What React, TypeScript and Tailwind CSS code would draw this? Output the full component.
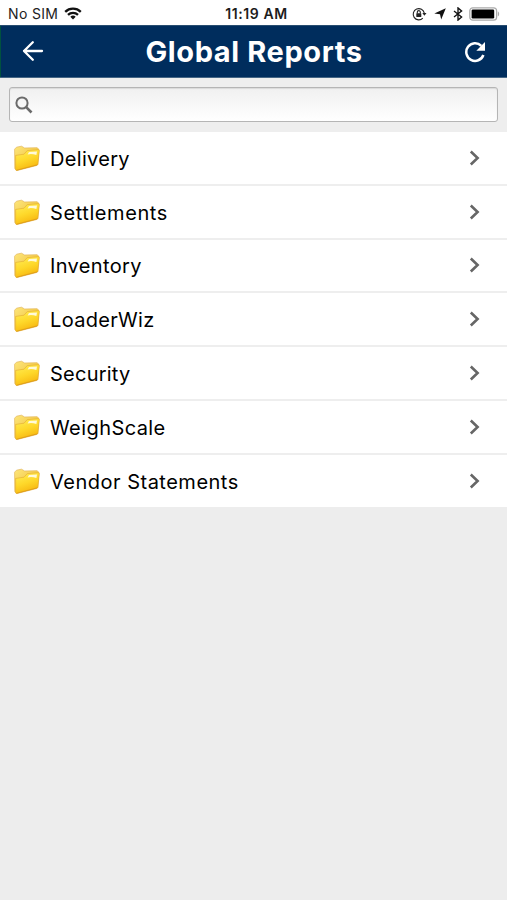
const reports = [
  { name: 'Delivery', tracking: 'tracking-[0.32px]' },
  { name: 'Settlements', tracking: 'tracking-[0.58px]' },
  { name: 'Inventory', tracking: 'tracking-[0.36px]' },
  { name: 'LoaderWiz', tracking: 'tracking-[0.32px]' },
  { name: 'Security', tracking: 'tracking-[0.24px]' },
  { name: 'WeighScale', tracking: 'tracking-[0.42px]' },
  { name: 'Vendor Statements', tracking: 'tracking-[0.5px]' },
];

function WifiIcon() {
  return (
    <svg width="18" height="13" viewBox="0 0 18 13" fill="none" stroke="#111" strokeWidth="2.3">
      <path d="M1.2 4.8a11.2 11.2 0 0 1 15.6 0" />
      <path d="M4 7.8a7.2 7.2 0 0 1 10 0" />
      <path d="M9 12.4 6.3 9.8a3.9 3.9 0 0 1 5.4 0z" fill="#111" stroke="none" />
    </svg>
  );
}

function RotationLockIcon() {
  return (
    <svg width="15" height="14" viewBox="0 0 15 14" fill="none" stroke="#222" strokeWidth="1.1">
      <path d="M10.8 11.2A5.6 5.6 0 1 1 12.3 6.2" />
      <path d="M10.3 6h4.2l-2.1 2.7z" fill="#222" stroke="none" />
      <rect x="4.3" y="6.2" width="5" height="3.8" rx=".5" fill="#222" stroke="none" />
      <path d="M5.3 6.5V5.1a1.5 1.5 0 0 1 3 0v1.4" />
    </svg>
  );
}

function LocationIcon() {
  return (
    <svg width="12" height="12" viewBox="0 0 12 12" fill="#111">
      <path d="M11.8.3 7.2 11.6 6 6.3.3 5.5z" />
    </svg>
  );
}

function BluetoothIcon() {
  return (
    <svg width="10" height="14" viewBox="0 0 10 14" fill="none" stroke="#111" strokeWidth="1.35">
      <path d="m1 4 7.6 6L5 13.1V.9L8.6 4 1 10" />
    </svg>
  );
}

function BatteryIcon() {
  return (
    <svg width="31" height="14" viewBox="0 0 31 14">
      <rect x=".8" y=".8" width="26.8" height="12.4" rx="3" fill="#fff" stroke="#aaa" strokeWidth="1.2" />
      <rect x="2.6" y="2.5" width="22.6" height="9" rx="1.2" fill="#000" />
      <path d="M28.8 4.6c1.8.5 1.8 4.3 0 4.8z" fill="#aaa" />
    </svg>
  );
}

function FolderIcon() {
  return (
    <svg width="28" height="28" viewBox="0 0 28 28" className="shrink-0">
      <defs>
        <linearGradient id="folderFront" x1="0.2" y1="0" x2="0.6" y2="1">
          <stop offset="0" stopColor="#ffec55" />
          <stop offset=".5" stopColor="#fed82a" />
          <stop offset="1" stopColor="#f6b20c" />
        </linearGradient>
        <linearGradient id="folderBack" x1="0" y1="0" x2="1" y2="1">
          <stop offset="0" stopColor="#fde67c" />
          <stop offset="1" stopColor="#edb625" />
        </linearGradient>
      </defs>
      <path
        d="M1.6 4.2 3.5 2.2 8.5 1.2 11.6 3 24 2.7 25.9 4.3 24.8 19.5 3.3 25.2 1.8 23.5z"
        fill="url(#folderBack)"
        stroke="#e2b65a"
        strokeWidth=".7"
        strokeLinejoin="round"
      />
      <path
        d="M2.6 10.4 11 9.2 14.2 5.7 25.3 4.6Q26.5 4.8 26.3 6L24.9 19.2Q24.7 20.2 23.6 20.5L4.2 25.5Q2.7 25.8 2.6 24.3z"
        fill="url(#folderFront)"
        stroke="#e3aa30"
        strokeWidth=".6"
      />
      <path d="M16 7.1 24 6.5 23.4 10.1Q18.4 8.4 14.6 9.6z" fill="#fffdec" opacity=".9" />
      <path d="M3.7 25.2 24.2 19.9" stroke="#c77b12" strokeWidth=".8" opacity=".5" />
    </svg>
  );
}

function StatusBar() {
  return (
    <div className="grid h-[25px] shrink-0 grid-cols-3 items-center bg-white pr-[7px] pl-2 pt-[2px] text-[14px] text-[#222]">
      <div className="flex items-center gap-[6px]">
        <span className="tracking-[0.35px]">No SIM</span>
        <WifiIcon />
      </div>
      <div className="pl-[5px] text-center text-[14px] font-semibold tracking-[0.6px] text-[#1c1c1c]">11:19 AM</div>
      <div className="flex items-center justify-end">
        <RotationLockIcon />
        <span className="ml-[7px] flex"><LocationIcon /></span>
        <span className="ml-[7px] flex"><BluetoothIcon /></span>
        <span className="ml-[6px] flex"><BatteryIcon /></span>
      </div>
    </div>
  );
}

function Header() {
  return (
    <header className="flex h-[53px] shrink-0 items-center justify-between border-y border-t-[#284d70] border-b-[#456685] bg-[#002d5d] pr-[21px] pl-[22px] text-white shadow-[inset_1px_0_0_#00513f]">
      <button aria-label="Back" className="flex w-[22px] -translate-y-px">
        <svg width="22" height="22" viewBox="0 0 22 22" fill="none" stroke="currentColor" strokeWidth="2.3" strokeLinecap="round" strokeLinejoin="round">
          <path d="M20 11H2M10.8 2.2 2 11l8.8 8.8" />
        </svg>
      </button>
      <h1 className="text-[29px] leading-none font-bold tracking-[0.6px]">Global Reports</h1>
      <button aria-label="Refresh" className="flex w-[22px]">
        <svg width="22" height="22" viewBox="0 0 22 22">
          <path d="M19.4 14A8.8 8.8 0 1 1 17.3 4.8" fill="none" stroke="currentColor" strokeWidth="2.5" />
          <path d="M21 1v8.7h-8.7z" fill="currentColor" />
        </svg>
      </button>
    </header>
  );
}

export default function App() {
  return (
    <div className="flex h-[900px] w-[507px] flex-col overflow-hidden bg-[#ededed] font-['Inter','Liberation_Sans',sans-serif] text-black">
      <StatusBar />
      <Header />
      <div className="h-[54px] shrink-0 bg-[#eeeeee] px-[9px] pt-[9px]">
        <label className="flex h-[35px] items-center rounded-[3px] border border-[#b5b5b5] bg-linear-to-b from-[#f0f0f0] to-white pl-[5px] shadow-[inset_0_1px_1px_#dadada]">
          <svg width="18" height="18" viewBox="0 0 18 18" fill="none" stroke="#6b6b6b" className="mt-px">
            <circle cx="7" cy="7" r="5.6" strokeWidth="2" />
            <path d="m11.2 11.2 5.3 5.3" strokeWidth="2.6" />
          </svg>
          <input className="min-w-0 flex-1 bg-transparent px-2 outline-none" />
        </label>
      </div>
      <ul className="shrink-0">
        {reports.map(({ name, tracking }) => (
          <li
            key={name}
            className="flex h-[53.75px] items-center border-b-2 border-[#eeeeee] bg-white pr-[26px] pl-[13px] last:h-[52.5px] last:border-b-0"
          >
            <span className="flex flex-1 items-center pt-[2px]">
              <FolderIcon />
              <span className={`ml-[9px] text-[20px] leading-6 ${tracking}`}>{name}</span>
            </span>
            <svg width="13" height="16" viewBox="0 0 13 16" fill="none" stroke="#666" strokeWidth="2.6">
              <path d="m2.8 1.5 6.8 6.5-6.8 6.5" />
            </svg>
          </li>
        ))}
      </ul>
    </div>
  );
}
